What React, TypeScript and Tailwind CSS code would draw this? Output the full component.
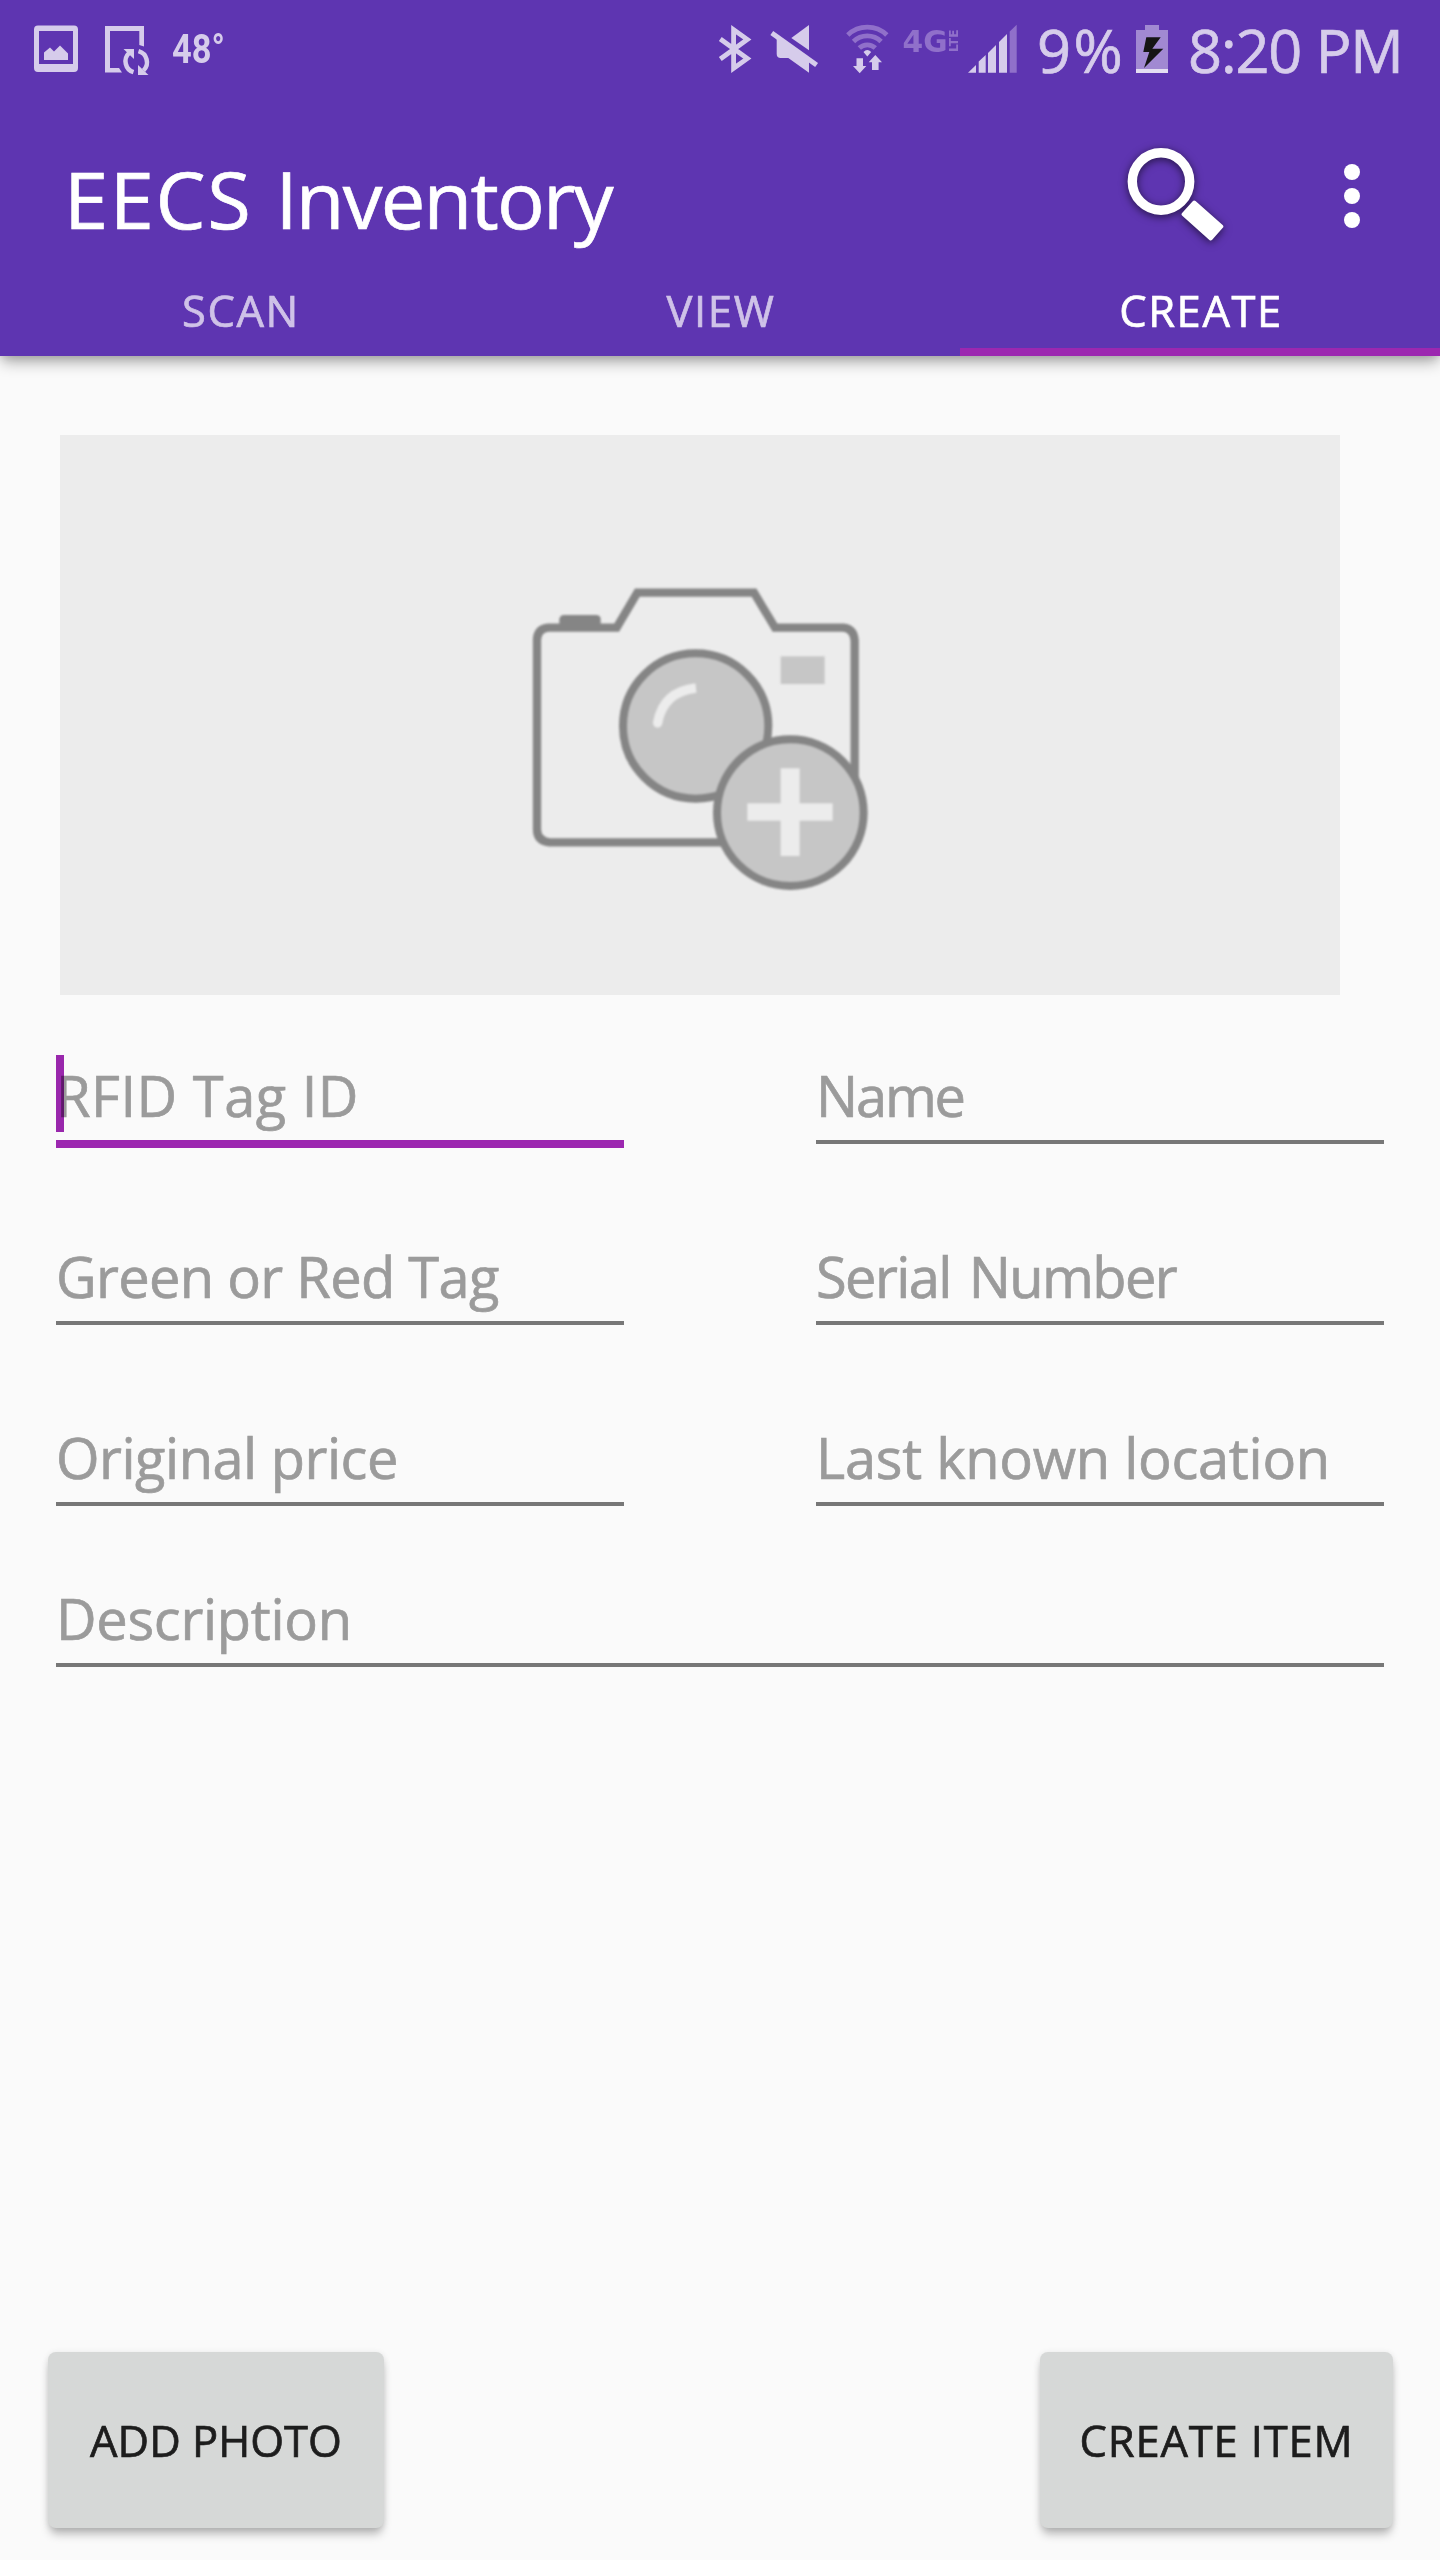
type FieldProps = { label: string; tracking?: string; focused?: boolean; className?: string };

function Field({ label, tracking = "", focused = false, className = "" }: FieldProps) {
  return (
    <div className={`h-[100px] ${className}`}>
      <div
        className={`relative box-content h-[92px] text-[56px] leading-[94px] whitespace-nowrap text-[#9b9b9b] ${
          focused ? "border-b-8 border-[#9c27b0]" : "border-b-4 border-[#777777]"
        }`}
      >
        <span className={tracking}>{label}</span>
        {focused && <span className="absolute top-[7px] left-0 h-[77px] w-2 bg-[#9c27b0] mix-blend-multiply" />}
      </div>
    </div>
  );
}

function NotificationIcons() {
  return (
    <svg className="h-24 w-[172px]" viewBox="0 0 172 96" fill="#d6cceb">
      <path
        fillRule="evenodd"
        d="M38 25.5H74Q78 25.5 78 29.5V68Q78 72 74 72H38Q34 72 34 68V29.5Q34 25.5 38 25.5ZM39 31V64H73V31Z"
      />
      <path d="M44 60V52.5L50 47.5L54 51.5L60 45.5L68 53.5V60Z" />
      <path d="M105 26H144V46.5L139.3 45V31H110V68H119L122 72.6H105Z" />
      <path d="M133.5 72.2A11.5 11.5 0 0 1 129 53" fill="none" stroke="#d6cceb" strokeWidth="4.5" />
      <path d="M123.5 49H134V59Z" />
      <path d="M138.5 51.2A11.5 11.5 0 0 1 143.5 70.5" fill="none" stroke="#d6cceb" strokeWidth="4.5" />
      <path d="M138 65V75H148.5Z" />
    </svg>
  );
}

function RadioIcons() {
  return (
    <svg className="h-24 w-[330px]" viewBox="707 0 330 96" fill="#d6cceb">
      <path
        d="M720.3 39L747.3 58.6L733.6 68.3V29.7L747.3 39.4L720.3 59"
        fill="none"
        stroke="#d6cceb"
        strokeWidth="4.8"
        strokeMiterlimit="10"
      />
      <path d="M791.3 38L809 25V50.3Z" />
      <path d="M776.7 36.5V54Q776.7 58 780.7 58H788.3L809 72.8V59.5Z" />
      <path d="M771.8 33L816.6 65" stroke="#d6cceb" strokeWidth="5" />
      <g fill="none" stroke="#9070ca" strokeWidth="4.8">
        <path d="M847.8 35A28.2 28.2 0 0 1 886.8 35" />
        <path d="M853.5 41.5A19.6 19.6 0 0 1 881.1 41.5" />
        <path d="M859.3 48A11.6 11.6 0 0 1 875.3 48" />
      </g>
      <path d="M863.5 52Q867.3 48 871.2 52L867.3 56.5Z" />
      <path d="M856.5 58.3H863V66H866.3L859.7 73.3L853 66H856.5Z" />
      <path d="M875.3 55L882 62.3H878.6V70H872V62.3H868.7Z" />
      <text
        x="902.5"
        y="51.7"
        fill="#9070ca"
        textLength="45"
        lengthAdjust="spacingAndGlyphs"
        className="font-['DejaVu_Sans',sans-serif] text-[30px] font-bold"
      >
        4G
      </text>
      <text
        transform="translate(957.5 52) rotate(-90)"
        fill="#9070ca"
        textLength="22.5"
        lengthAdjust="spacingAndGlyphs"
        className="font-['DejaVu_Sans',sans-serif] text-[12.5px] font-bold"
      >
        LTE
      </text>
      <path d="M968 72.8L976 65V72.8Z" />
      <path d="M978.7 72.8V61.5L985.7 55V72.8Z" />
      <path d="M988 72.8V53L996 45V72.8Z" />
      <path d="M999 72.8V42L1007 34V72.8Z" />
      <path d="M1009.7 72.8V31.5L1016.7 24.8V72.8Z" fill="#9070ca" />
    </svg>
  );
}

function BatteryIcon() {
  return (
    <svg className="h-24 w-8" viewBox="1136 0 32 96">
      <path d="M1136 30H1145V25H1159V30H1168V73H1136Z" fill="#a189d2" />
      <path d="M1136 69H1168V73H1136Z" fill="#e4def2" />
      <path d="M1146.3 37.3H1160.7L1152.3 48.7H1163.3L1144 68L1149.3 52H1143.3Z" fill="#151515" />
    </svg>
  );
}

function SearchIcon() {
  return (
    <svg className="h-[168px] w-[120px] drop-shadow-[0_2px_4px_rgba(0,0,0,0.6)]" viewBox="1110 96 120 168">
      <circle cx="1161" cy="181.5" r="28.7" fill="none" stroke="#fff" strokeWidth="9.4" />
      <path
        d="M1194.2 202.5L1221.3 226.5L1210.7 238.5L1183.6 214.3Z"
        fill="#fff"
        stroke="#fff"
        strokeWidth="4"
        strokeLinejoin="round"
      />
    </svg>
  );
}

function CameraIcon() {
  return (
    <svg className="h-[350px] w-[400px] blur-[1px]" viewBox="0 0 1200 1050" fill="none">
      <path
        d="M700 844H148Q111 840 111 805V235Q113 203 145 200H350L412 95H762L825 200H1030Q1061 203 1064 238V700"
        stroke="#858585"
        strokeWidth="25"
      />
      <path d="M178 200V175Q180 162 192 162H290Q302 163 302 175V200Z" fill="#858585" />
      <rect x="842" y="286" width="132" height="83" fill="#c6c6c6" />
      <circle cx="587" cy="495" r="218" fill="#c6c6c6" stroke="#858585" strokeWidth="24" />
      <path d="M473 485Q490 392 588 381" stroke="#ececec" strokeWidth="28" />
      <circle cx="473" cy="486" r="14" fill="#ececec" />
      <circle cx="871" cy="755" r="220" fill="#c6c6c6" stroke="#858585" strokeWidth="24" />
      <path d="M842 622H899V727H998V779H899V885H842V779H742V727H842Z" fill="#ececec" />
    </svg>
  );
}

const buttonClass =
  "flex h-[176px] items-center justify-center rounded-lg bg-[#d6d8d7] pt-0.5 text-[43.5px] text-[#1d1d1d] shadow-[0_8px_10px_-2px_rgba(0,0,0,0.26),0_1px_6px_rgba(0,0,0,0.1)]";

export default function App() {
  return (
    <div className="flex h-[2560px] w-[1440px] flex-col overflow-hidden bg-[#fafafa] font-['Open_Sans',sans-serif] [-webkit-text-stroke:0.7px_currentColor]">
      <header className="bg-[#5e35b1] shadow-[0_8px_14px_-2px_rgba(0,0,0,0.32),0_2px_8px_rgba(0,0,0,0.1)]">
        <div className="flex h-24 items-center justify-between text-[#d6cceb]">
          <div className="flex items-center [-webkit-text-stroke:0px]">
            <NotificationIcons />
            <span className="origin-left scale-x-[0.84] pt-0.5 font-['Roboto',sans-serif] text-[41px] leading-none font-bold">
              48°
            </span>
          </div>
          <div className="flex w-[733px] items-center text-[59.5px] leading-[94px]">
            <div className="[-webkit-text-stroke:0px]">
              <RadioIcons />
            </div>
            <span className="w-[99px] pt-[3px] tracking-[2.5px]">9%</span>
            <BatteryIcon />
            <span className="pt-[3px] pl-5 tracking-[-1.1px] whitespace-nowrap">8:20 PM</span>
          </div>
        </div>
        <div className="flex h-[168px] items-center pl-16 text-white">
          <h1 className="flex flex-1 gap-[23px] pt-[38px] text-[79.5px] leading-none">
            <span className="tracking-[1.6px]">EECS</span>
            <span className="tracking-[-1.8px]">Inventory</span>
          </h1>
          <SearchIcon />
          <div className="flex w-[210px] flex-col gap-2 pt-8 pl-[114px]">
            <span className="size-4 rounded-full bg-white" />
            <span className="size-4 rounded-full bg-white" />
            <span className="size-4 rounded-full bg-white" />
          </div>
        </div>
        <nav className="grid h-[92px] grid-cols-3 text-center text-[43.5px] leading-[94px] tracking-[1.6px] text-[#cfc2e8]">
          <span className="h-[92px] pl-0.5">SCAN</span>
          <span className="h-[92px] pl-0.5">VIEW</span>
          <span className="h-[92px] pl-0.5 text-white shadow-[inset_0_-8px_0_#9c27b0]">CREATE</span>
        </nav>
      </header>

      <main className="flex flex-1 flex-col">
        <div className="mt-[79px] ml-[60px] flex h-[560px] w-[1280px] items-center justify-center bg-[#ececec] pt-[42px]">
          <CameraIcon />
        </div>

        <div className="mt-[53px] grid grid-cols-2 gap-x-48 gap-y-[81px] px-14">
          <Field label="RFID Tag ID" focused tracking="tracking-[0.5px]" />
          <Field label="Name" tracking="tracking-[-2.2px]" />
          <Field label="Green or Red Tag" tracking="tracking-[-0.69px]" />
          <Field label="Serial Number" tracking="tracking-[-1.6px] [word-spacing:5px]" />
          <Field label="Original price" tracking="tracking-[-0.5px]" />
          <Field label="Last known location" tracking="tracking-[-0.28px]" />
        </div>
        <Field label="Description" tracking="tracking-[-0.3px]" className="mx-14 mt-[61px]" />

        <div className="mt-auto flex justify-between pr-[47px] pb-8 pl-12">
          <button className={`${buttonClass} w-[336px]`}>ADD PHOTO</button>
          <button className={`${buttonClass} w-[353px] tracking-[0.84px]`}>CREATE ITEM</button>
        </div>
      </main>
    </div>
  );
}
